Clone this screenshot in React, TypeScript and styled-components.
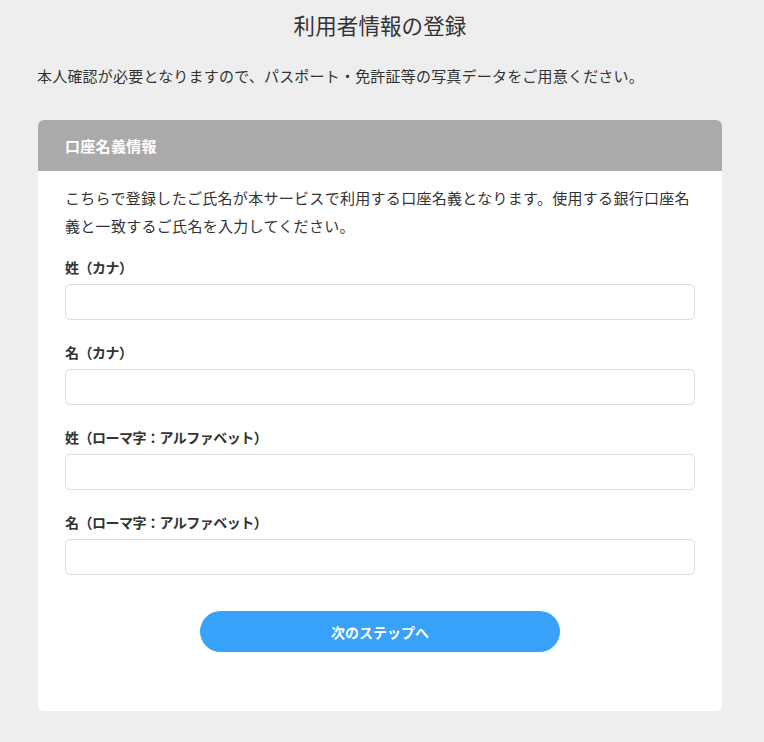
import React from "react";
import styled, { createGlobalStyle } from "styled-components";

const GlobalStyle = createGlobalStyle`
  html, body {
    margin: 0;
    padding: 0;
    background: #eeeeee;
  }

  body {
    font-family: "Noto Sans CJK JP", "Noto Sans", sans-serif;
    color: #333333;
  }

  * {
    box-sizing: border-box;
  }
`;

const Page = styled.main`
  display: flex;
  flex-direction: column;
  padding: 0 42px 32px 38px;
  min-height: 742px;
`;

const Heading = styled.h1`
  margin: 0;
  padding-top: 11px;
  font-size: 21.5px;
  font-weight: 400;
  line-height: 28px;
  text-align: center;
  color: #333333;
  letter-spacing: 0.1px;
`;

const Intro = styled.p`
  margin: 26px 0 0 -1px;
  font-size: 15px;
  line-height: 22px;
  letter-spacing: 0.2px;
`;

const Card = styled.section`
  margin-top: 33px;
  background: #ffffff;
  border-radius: 6px;
  overflow: hidden;
`;

const CardHeader = styled.header`
  display: flex;
  align-items: center;
  height: 51px;
  padding: 0 27px;
  background: #aaaaaa;
  color: #ffffff;
  font-size: 15px;
  font-weight: 700;
  letter-spacing: 0.3px;
`;

const CardBody = styled.div`
  display: flex;
  flex-direction: column;
  padding: 13px 27px 59px;
`;

const Description = styled.p`
  margin: 0 0 17px;
  font-size: 15px;
  line-height: 28px;
  letter-spacing: 0.3px;
`;

const Field = styled.label`
  display: flex;
  flex-direction: column;
  gap: 7px;
  margin-bottom: 22px;

  &:last-of-type {
    margin-bottom: 0;
  }
`;

const FieldLabel = styled.span`
  font-size: 14px;
  font-weight: 700;
  line-height: 20px;
  letter-spacing: -0.5px;
  color: #333333;
`;

const TextInput = styled.input`
  width: 100%;
  height: 36px;
  padding: 0 12px;
  border: 1px solid #dddddd;
  border-radius: 5px;
  background: #ffffff;
  font: inherit;
  font-size: 15px;
  outline: none;
`;

const Actions = styled.div`
  display: flex;
  justify-content: center;
  margin-top: 36px;
`;

const PrimaryButton = styled.button`
  width: 360px;
  height: 41px;
  border: none;
  border-radius: 999px;
  background: #38a1f9;
  color: #ffffff;
  font: inherit;
  font-size: 14px;
  font-weight: 700;
  cursor: pointer;
`;

const fields = [
  "姓（カナ）",
  "名（カナ）",
  "姓（ローマ字：アルファベット）",
  "名（ローマ字：アルファベット）",
];

const App: React.FC = () => {
  return (
    <>
      <GlobalStyle />
      <Page>
        <Heading>利用者情報の登録</Heading>
        <Intro>
          本人確認が必要となりますので、パスポート・免許証等の写真データをご用意ください。
        </Intro>
        <Card>
          <CardHeader>口座名義情報</CardHeader>
          <CardBody>
            <Description>
              こちらで登録したご氏名が本サービスで利用する口座名義となります。使用する銀行口座名義と一致するご氏名を入力してください。
            </Description>
            {fields.map((label) => (
              <Field key={label}>
                <FieldLabel>{label}</FieldLabel>
                <TextInput type="text" />
              </Field>
            ))}
            <Actions>
              <PrimaryButton type="button">次のステップへ</PrimaryButton>
            </Actions>
          </CardBody>
        </Card>
      </Page>
    </>
  );
};

export default App;
